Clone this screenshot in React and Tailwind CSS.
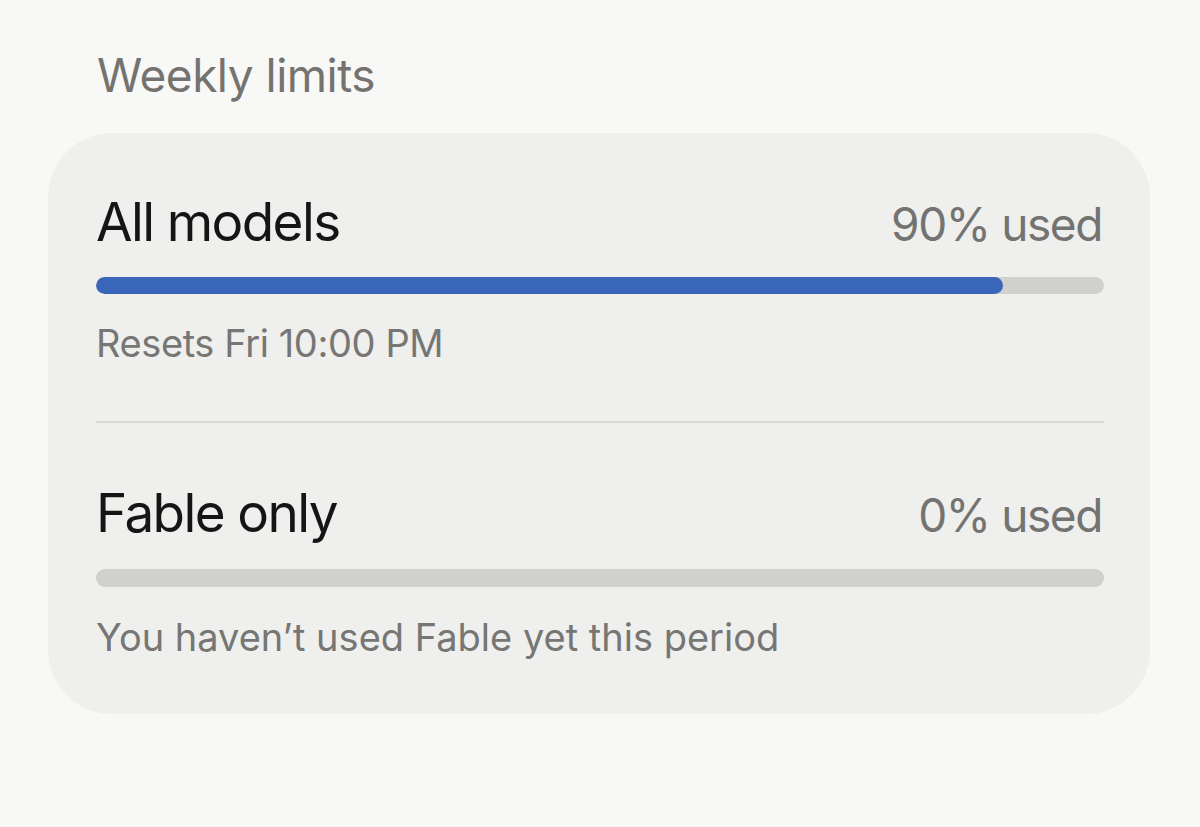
export default function App() {
  const font = { fontFamily: "Inter, 'Noto Sans', sans-serif" };
  return (
    <div className="w-[1200px] h-[827px] bg-[#f8f8f6] overflow-hidden" style={font}>
      <div className="pl-[48px] pr-[50px] pt-[47px]">
        <h2 className="pl-[49px] text-[46px] leading-[56px] tracking-[-0.5px] text-[#747370] font-normal">Weekly limits</h2>
        <div className="mt-[30px] bg-[#efefed] rounded-[64px] pl-[48px] pr-[46px] pt-[57px] pb-[55px]">
          <div className="flex items-baseline justify-between pr-[2px]">
            <span className="text-[53px] leading-[64px] tracking-[-1.6px] text-[#151515]">All models</span>
            <span className="text-[46px] leading-[64px] tracking-[-1.4px] text-[#737371]">90% used</span>
          </div>
          <div className="mt-[21px] h-[17px] rounded-full bg-[#d0d0ce] overflow-hidden">
            <div className="h-full rounded-full bg-[#3a66b9]" style={{ width: "90%" }} />
          </div>
          <div className="mt-[27px] text-[38px] leading-[44px] tracking-[-0.4px] text-[#767674]">Resets Fri 10:00 PM</div>
          <div className="mt-[56px] h-[2px] bg-[#d8d8d6]" />
          <div className="mt-[58px] flex items-baseline justify-between pr-[2px]">
            <span className="text-[53px] leading-[64px] tracking-[-1.6px] text-[#151515]">Fable only</span>
            <span className="text-[46px] leading-[64px] tracking-[-1.4px] text-[#737371]">0% used</span>
          </div>
          <div className="mt-[22px] h-[18px] rounded-full bg-[#d0d0ce]" />
          <div className="mt-[28px] text-[38px] leading-[44px] text-[#767674]">You haven’t used Fable yet this period</div>
        </div>
      </div>
    </div>
  );
}
